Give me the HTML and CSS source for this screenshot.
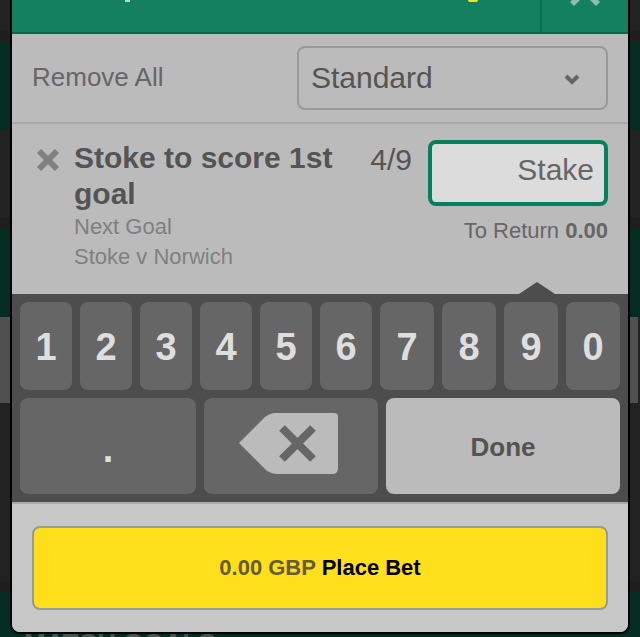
FILE: index.html
```
<!DOCTYPE html>
<html lang="en">
<head>
    <meta charset="UTF-8">
    <meta name="viewport" content="width=device-width, initial-scale=1">
    <title>Bet Slip</title>
    <link rel="stylesheet" href="styles.css">
</head>
<body>

    <!-- Dimmed page behind the slip -->
    <div class="backdrop">
        <div class="band"></div>
        <div class="band green"></div>
        <div class="band"></div>
        <div class="band green"></div>
        <div class="band grey"></div>
        <div class="band tall"></div>
        <div class="band green last">MATCH GOALS</div>
    </div>

    <main class="betslip">
        <header class="slip-header">
            <div class="slip-title">
                <span class="tail"></span>
                <span class="coin"></span>
            </div>
            <button class="close" aria-label="Close">
                <svg width="30" height="6" viewBox="0 0 30 6"><path d="M2 0H10L4 6L0 2ZM20 0H28L30 2L26 6Z"/></svg>
            </button>
        </header>

        <div class="toolbar">
            <button class="remove-all">Remove All</button>
            <div class="select-wrap">
                <select class="bet-type" aria-label="Bet type">
                    <option>Standard</option>
                </select>
                <svg class="chevron" width="16" height="12" viewBox="0 0 16 12"><path d="M2 2l6 6 6-6"/></svg>
            </div>
        </div>

        <section class="bet">
            <button class="remove" aria-label="Remove bet">
                <svg width="24" height="24" viewBox="0 0 24 24"><path d="M3 3l18 18M21 3L3 21"/></svg>
            </button>
            <div class="selection">
                <h2>Stoke to score 1st goal</h2>
                <p>Next Goal</p>
                <p>Stoke v Norwich</p>
            </div>
            <div class="odds">4/9</div>
            <div class="stake-box">
                <input type="text" class="stake" placeholder="Stake" aria-label="Stake">
                <p class="to-return">To Return <strong>0.00</strong></p>
            </div>
        </section>

        <section class="keypad">
            <div class="digits">
                <button class="key">1</button>
                <button class="key">2</button>
                <button class="key">3</button>
                <button class="key">4</button>
                <button class="key">5</button>
                <button class="key">6</button>
                <button class="key">7</button>
                <button class="key">8</button>
                <button class="key">9</button>
                <button class="key">0</button>
            </div>
            <div class="actions">
                <button class="key point">.</button>
                <button class="key delete" aria-label="Delete">
                    <svg width="100" height="62" viewBox="0 0 100 62">
                        <path class="shape" d="M0 30L26 4Q31 0 37 0H95Q99 0 99 4V55Q99 61 93 61H39Q32 61 27 57Z"/>
                        <path class="cross" d="M43 15L74 46M74 15L43 46"/>
                    </svg>
                </button>
                <button class="key done">Done</button>
            </div>
        </section>

        <footer class="slip-footer">
            <button class="place-bet"><span>0.00 GBP</span> Place Bet</button>
        </footer>
    </main>

</body>
</html>
```
FILE: styles.css
```
* {
    box-sizing: border-box;
}

body {
    margin: 0;
    font-family: "Liberation Sans", Arial, sans-serif;
    color: #545454;
    background-color: #222;
    overflow: hidden;
}

button,
input,
select {
    font-family: inherit;
    margin: 0;
}

button {
    border: none;
    padding: 0;
    background: none;
    cursor: pointer;
}

h2,
p {
    margin: 0;
}

svg {
    display: block;
}

/* Page behind the slip */
.backdrop {
    position: fixed;
    inset: 0;
    overflow: hidden;
}

.band {
    height: 98px;
    background: linear-gradient(#232223 88px, #1f1d1e 88px);
}

.band:first-child {
    height: 41px;
    background: linear-gradient(#232223 31px, #1f1d1e 31px);
}

.band.green {
    height: 89px;
    background: #052c20;
}

.band.grey {
    height: 86px;
    background: #505050;
    border-right: 2px solid #222;
}

.band.tall {
    height: 188px;
    background: linear-gradient(#222 178px, #1f1d1e 178px);
}

.band.last {
    padding: 32px 24px 0;
    color: #4c5450;
    font-size: 26px;
    font-weight: bold;
    line-height: 40px;
    white-space: nowrap;
}

/* Slip */
.betslip {
    position: relative;
    margin: 0 10px;
    border: 2px solid #000;
    border-top: none;
    border-radius: 0 0 10px 10px;
    background: #bbb;
    overflow: hidden;
}

.slip-header {
    display: flex;
    height: 34px;
    background: #15805d;
    border-bottom: 2px solid #066846;
}

.slip-title {
    flex: 1;
    display: flex;
    justify-content: space-between;
    padding: 0 62px 0 113px;
}

.tail {
    width: 5px;
    height: 2px;
    background: #b5dacd;
}

.coin {
    width: 10px;
    height: 2px;
    border-radius: 0 0 4px 4px;
    background: #f5e11c;
}

.close {
    display: flex;
    justify-content: center;
    width: 88px;
    border-left: 2px solid #066f4d;
}

.close svg {
    fill: #8bc0ae;
}

.toolbar {
    display: flex;
    align-items: center;
    justify-content: space-between;
    height: 90px;
    padding: 0 20px;
    border-bottom: 2px solid #a8a8a8;
}

.remove-all {
    padding-bottom: 2px;
    color: #666;
    font-size: 26px;
    line-height: 30px;
}

.select-wrap {
    position: relative;
    width: 54%;
}

.bet-type {
    appearance: none;
    width: 100%;
    height: 64px;
    padding: 0 12px 2px;
    border: 2px solid #999;
    border-radius: 8px;
    background: transparent;
    color: #545454;
    font-size: 30px;
}

.chevron {
    position: absolute;
    right: 28px;
    top: 28px;
    fill: none;
    stroke: #666;
    stroke-width: 4;
    pointer-events: none;
}

/* Bet */
.bet {
    display: flex;
    height: 170px;
    padding: 16px 20px 0;
}

.remove {
    align-self: flex-start;
    width: 42px;
    padding: 8px 4px;
}

.remove svg {
    fill: none;
    stroke: #808080;
    stroke-width: 6;
}

.selection {
    flex: 1;
}

.selection h2 {
    font-size: 30px;
    line-height: 36px;
}

.selection p {
    color: #808080;
    font-size: 22px;
    line-height: 30px;
}

.odds {
    margin: 0 16px;
    font-size: 30px;
    line-height: 40px;
}

.stake-box {
    width: 180px;
    text-align: right;
}

.stake {
    display: block;
    width: 100%;
    height: 66px;
    padding: 0 10px 6px;
    border: 4px solid #04805d;
    border-radius: 8px;
    background: #dcdcdc;
    color: #545454;
    font-size: 30px;
    text-align: right;
}

.stake::placeholder {
    color: #666;
}

.to-return {
    margin-top: 10px;
    color: #666;
    font-size: 22px;
    line-height: 30px;
}

/* Keypad */
.keypad {
    position: relative;
    padding: 8px;
    background: #4d4d4d;
}

.keypad::before {
    content: "";
    position: absolute;
    right: 73px;
    bottom: 100%;
    border: 18px solid transparent;
    border-top: none;
    border-bottom: 12px solid #4d4d4d;
}

.digits {
    display: grid;
    grid-template-columns: repeat(6, 52fr) repeat(4, 54fr);
    gap: 8px;
}

.key {
    display: flex;
    align-items: center;
    justify-content: center;
    height: 88px;
    padding-top: 2px;
    border-radius: 8px;
    background: #666;
    color: #dedede;
    font-size: 38px;
    font-weight: bold;
}

.actions {
    display: grid;
    grid-template-columns: 176fr 174fr 234fr;
    gap: 8px;
    margin-top: 8px;
}

.actions .key {
    height: 96px;
}

.actions .point {
    padding-top: 6px;
}

.actions .delete {
    padding: 0 4px 4px 0;
}

.delete .shape {
    fill: #bbb;
}

.delete .cross {
    fill: none;
    stroke: #666;
    stroke-width: 8;
}

.actions .done {
    background: #bbb;
    color: #545454;
    font-size: 26px;
}

.slip-footer {
    padding: 22px 20px;
    border-top: 2px solid #aaa;
    background: #c7c7c7;
}

.place-bet {
    display: block;
    width: 100%;
    height: 84px;
    border: 2px solid #999;
    border-radius: 8px;
    background: #ffdf1b;
    color: #000;
    font-size: 22px;
    font-weight: bold;
}

.place-bet span {
    color: #665b33;
}
```
